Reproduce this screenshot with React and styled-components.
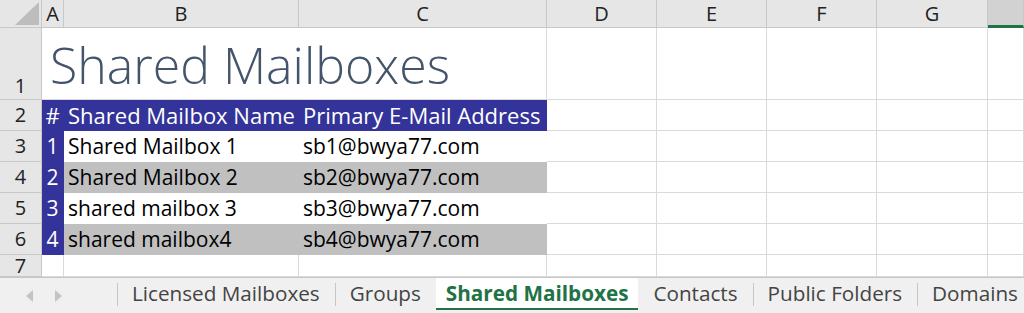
import React from "react";
import styled, { createGlobalStyle } from "styled-components";

const GlobalStyle = createGlobalStyle`
  html, body {
    margin: 0;
    padding: 0;
    background: #ffffff;
  }
  body {
    font-family: "Open Sans", "Noto Sans", sans-serif;
  }
`;

const GRID = "#dadada";
const HEAD_BG = "#e6e6e6";
const HEAD_LINE = "#c8c8c8";
const BLUE = "#333399";
const GRAY = "#c0c0c0";

const Window = styled.div`
  width: 1024px;
  height: 313px;
  overflow: hidden;
  display: flex;
  flex-direction: column;
  background: #ffffff;
`;

const Sheet = styled.div`
  display: grid;
  grid-template-columns: 42px 22px 235px 248px 110px 110px 110px 111px 1fr;
  grid-template-rows: 28px 72px 31px 31px 31px 31px 31px 22px;
  flex: none;
`;

const Corner = styled.div`
  background: ${HEAD_BG};
  border-right: 1px solid ${HEAD_LINE};
  border-bottom: 1px solid ${HEAD_LINE};
  position: relative;

  svg {
    position: absolute;
    right: 2px;
    bottom: 2px;
  }
`;

const ColHead = styled.div`
  background: ${(p) => (p.$active ? "#d2d2d2" : HEAD_BG)};
  border-right: 1px solid ${HEAD_LINE};
  border-bottom: ${(p) => (p.$active ? "3px solid #217346" : `1px solid ${HEAD_LINE}`)};
  display: flex;
  align-items: center;
  justify-content: center;
  font-size: 20px;
  color: #222;
  box-sizing: border-box;
`;

const RowHead = styled.div`
  background: ${HEAD_BG};
  border-right: 1px solid ${HEAD_LINE};
  border-bottom: 1px solid ${HEAD_LINE};
  display: flex;
  align-items: ${(p) => (p.$bottom ? "flex-end" : "center")};
  justify-content: center;
  font-size: 20px;
  color: #222;
  line-height: 1;
  padding-bottom: ${(p) => (p.$bottom ? "3px" : "0")};
  box-sizing: border-box;
`;

const Cell = styled.div`
  box-sizing: border-box;
  background: ${(p) => p.$fill || "#ffffff"};
  border-right: 1px solid ${(p) => p.$fill || GRID};
  border-bottom: 1px solid ${(p) => p.$fill || GRID};
  color: ${(p) => p.$ink || "#000"};
  font-size: ${(p) => (p.$head ? "22px" : "21px")};
  white-space: nowrap;
  overflow: hidden;
  display: flex;
  align-items: center;
  justify-content: ${(p) => (p.$center ? "center" : "flex-start")};
  padding: ${(p) => (p.$center ? "0" : "0 4px")};
`;

const TitleCell = styled.div`
  grid-column: span 3;
  box-sizing: border-box;
  border-right: 1px solid ${GRID};
  border-bottom: 1px solid ${GRID};
  display: flex;
  align-items: flex-end;
  padding: 0 0 9px 8px;
  font-size: 50px;
  font-weight: 300;
  line-height: 1;
  color: #44546a;
  white-space: nowrap;
`;

const TabBar = styled.div`
  flex: 1;
  display: flex;
  align-items: stretch;
  background: #f0f0f0;
  border-top: 1px solid #c6c6c6;
  overflow: hidden;
`;

const Nav = styled.div`
  flex: none;
  width: 117px;
  display: flex;
  align-items: center;
  gap: 22px;
  padding-left: 26px;
  box-sizing: border-box;
`;

const Tab = styled.div`
  flex: none;
  display: flex;
  align-items: center;
  padding: 0 ${(p) => (p.$active ? "10px" : "15px")};
  font-size: 20.7px;
  white-space: nowrap;
  position: relative;
  color: ${(p) => (p.$active ? "#217346" : "#444")};
  font-weight: ${(p) => (p.$active ? 700 : 400)};
  background: ${(p) => (p.$active ? "#ffffff" : "transparent")};
  margin-top: ${(p) => (p.$active ? "-1px" : "0")};
  border-bottom: 2px solid ${(p) => (p.$active ? "#217346" : "transparent")};
  margin-bottom: 3px;

  &::before {
    content: "";
    position: absolute;
    left: 0;
    top: 5px;
    bottom: 2px;
    width: 1px;
    background: ${(p) => (p.$active || p.$afterActive ? "transparent" : "#c6c6c6")};
  }
`;

const Arrow = ({ dir }) => (
  <svg width="7" height="12" viewBox="0 0 7 12">
    <path d={dir === "left" ? "M7 0 L0 6 L7 12 Z" : "M0 0 L7 6 L0 12 Z"} fill="#c4c4c4" />
  </svg>
);

const columns = ["A", "B", "C", "D", "E", "F", "G", ""];

const mailboxes = [
  { name: "Shared Mailbox 1", mail: "sb1@bwya77.com" },
  { name: "Shared Mailbox 2", mail: "sb2@bwya77.com" },
  { name: "shared mailbox 3", mail: "sb3@bwya77.com" },
  { name: "shared mailbox4", mail: "sb4@bwya77.com" },
];

const tabs = ["Licensed Mailboxes", "Groups", "Shared Mailboxes", "Contacts", "Public Folders", "Domains"];
const activeTab = 2;

const EmptyCells = ({ row }) =>
  [0, 1, 2, 3, 4].map((i) => <Cell key={`${row}-e${i}`} />);

const App = () => {
  return (
    <Window>
      <GlobalStyle />
      <Sheet>
        <Corner>
          <svg width="24" height="23" viewBox="0 0 24 23">
            <path d="M24 0 L24 23 L0 23 Z" fill="#bdbdbd" />
          </svg>
        </Corner>
        {columns.map((c, i) => (
          <ColHead key={c || "h"} $active={i === columns.length - 1}>
            {c}
          </ColHead>
        ))}

        <RowHead $bottom>1</RowHead>
        <TitleCell>Shared Mailboxes</TitleCell>
        <EmptyCells row={1} />

        <RowHead>2</RowHead>
        <Cell $fill={BLUE} $ink="#fff" $head $center>#</Cell>
        <Cell $fill={BLUE} $ink="#fff" $head>Shared Mailbox Name</Cell>
        <Cell $fill={BLUE} $ink="#fff" $head>Primary E-Mail Address</Cell>
        <EmptyCells row={2} />

        {mailboxes.map((m, i) => {
          const fill = i % 2 === 1 ? GRAY : "#ffffff";
          return (
            <React.Fragment key={m.mail}>
              <RowHead>{i + 3}</RowHead>
              <Cell $fill={BLUE} $ink="#fff" $center>{i + 1}</Cell>
              <Cell $fill={fill}>{m.name}</Cell>
              <Cell $fill={fill}>{m.mail}</Cell>
              <EmptyCells row={i + 3} />
            </React.Fragment>
          );
        })}

        <RowHead>7</RowHead>
        <Cell />
        <Cell />
        <Cell />
        <EmptyCells row={7} />
      </Sheet>

      <TabBar>
        <Nav>
          <Arrow dir="left" />
          <Arrow dir="right" />
        </Nav>
        {tabs.map((t, i) => (
          <Tab key={t} $active={i === activeTab} $afterActive={i === activeTab + 1}>
            {t}
          </Tab>
        ))}
      </TabBar>
    </Window>
  );
};

export default App;
